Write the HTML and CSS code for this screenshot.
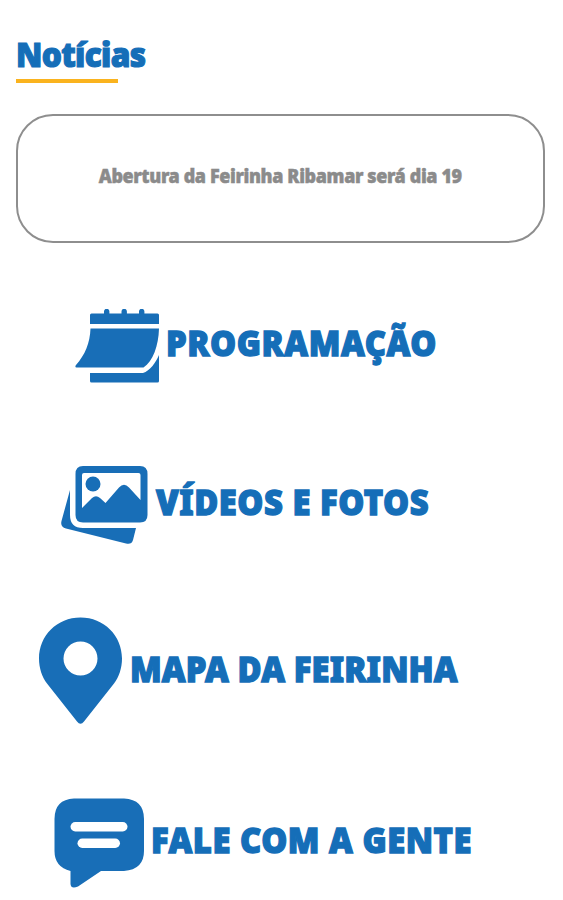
FILE: index.html
```html
<!DOCTYPE html>
<html lang="pt-BR">
<head>
<meta charset="utf-8">
<meta name="viewport" content="width=device-width, initial-scale=1">
<title>Feirinha Ribamar</title>
<link rel="stylesheet" href="styles.css">
</head>
<body>
<main class="page">
  <h1 class="title"><span class="title-text">Notícias</span></h1>
  <a class="news"><span class="news-text">Abertura da Feirinha Ribamar será dia 19</span></a>
  <nav class="menu">
    <a class="item item-program">
      <svg class="icon" width="85" height="74" viewBox="75 309 85 74">
        <path d="M90 324V315Q90 313.500 91.500 313.500H104V311.500A2.700 2.700 0 0 1 109.400 311.500V313.500H121.500V311.500A2.700 2.700 0 0 1 126.900 311.500V313.500H139V311.500A2.700 2.700 0 0 1 144.400 311.500V313.500H157.500Q159 313.500 159 315V324Z"/>
        <path d="M90.500 328.500H159C158.500 346 153 361 143.500 367.500H76.500Q74.500 367 76 365C85 355 90 343 90.500 328.500Z"/>
        <path d="M90 373H143C150 371 156 362 159 355V381Q159 382.500 157.500 382.500H91.500Q90 382.500 90 381Z"/>
      </svg>
      <span class="label label-program">PROGRAMAÇÃO</span>
    </a>
    <a class="item item-media">
      <svg class="icon" width="87" height="79" viewBox="61 466 87 79">
        <path fill-rule="evenodd" d="M83 466H140Q147.500 466 147.500 474V515Q147.500 522.500 140 522.500H83Q75.500 522.500 75.500 515V474Q75.500 466 83 466ZM84 473Q82 473 82 475V508L92 498Q96 494.500 100 498L105.500 503L119 487.500Q124 482 129 487.500L140.500 500V475Q140.500 473 138.500 473Z"/>
        <circle cx="93" cy="484" r="7.500"/>
        <path d="M70 490V515Q70 528 83 528H136L133 540Q131.500 545 126 543.500L66 528.500Q60 527 61.500 521Z"/>
      </svg>
      <span class="label label-media">VÍDEOS E FOTOS</span>
    </a>
    <a class="item item-map">
      <svg class="icon" width="84" height="107" viewBox="39 617 84 107">
        <path fill-rule="evenodd" d="M80.500 617.500C57 617.500 39 635.500 39 658.500C39 668 42 677 47 683.500L77 721.500Q80.500 726 84 721.500L114 683.500C119 677 122 668 122 658.500C122 635.500 104 617.500 80.500 617.500ZM80.500 641.500A17 17 0 1 1 80.500 675.500A17 17 0 1 1 80.500 641.500Z"/>
      </svg>
      <span class="label label-map">MAPA DA FEIRINHA</span>
    </a>
    <a class="item item-contact">
      <svg class="icon" width="90" height="90" viewBox="54 798 90 90">
        <path d="M74 798.500H124Q144 799.500 144 819V851Q144 869.500 124 871H101L78 886.500Q71 889.500 70.500 884V871Q54.500 867 54.500 851V819Q54.500 799.500 74 798.500Z"/>
        <rect class="gap" x="70.500" y="822" width="57" height="9.500" rx="4.750"/>
        <rect class="gap" x="77.500" y="838.500" width="42.500" height="9.500" rx="4.750"/>
      </svg>
      <span class="label label-contact">FALE COM A GENTE</span>
    </a>
  </nav>
</main>
</body>
</html>
```
FILE: styles.css
```css
* { box-sizing: border-box; }
body {
  margin: 0;
  background: #fff;
  color: #156eb8;
  font-family: "Noto Sans", "Open Sans", sans-serif;
  font-weight: 900;
}
.page {
  height: 900px;
  padding: 34px 18px 0 16px;
  overflow: hidden;
}
.title {
  width: 102px;
  height: 49px;
  margin: 0 0 31px;
  border-bottom: 4px solid #fab31e;
  font-size: 34px;
  line-height: 41px;
  font-weight: 900;
  white-space: nowrap;
}
.title-text {
  display: inline-block;
  transform: scaleX(0.93);
  transform-origin: left;
  letter-spacing: -0.700px;
  -webkit-text-stroke: 1.200px currentColor;
}
.news {
  display: flex;
  align-items: center;
  justify-content: center;
  height: 129px;
  padding-bottom: 7px;
  border: 2px solid #8e8e8e;
  border-radius: 37px;
  color: #8b8b8b;
  font-size: 19.500px;
  white-space: nowrap;
}
.news-text {
  transform: scaleX(0.92);
  letter-spacing: -0.400px;
  -webkit-text-stroke: 0.500px currentColor;
}
.menu { display: flex; flex-direction: column; }
.item {
  display: flex;
  align-items: center;
  white-space: nowrap;
}
.item-program { margin: 66px 0 0 59px; height: 74px; gap: 6px; }
.item-media { margin: 83px 0 0 45px; height: 79px; gap: 8px; }
.item-map { margin: 72px 0 0 23px; height: 107px; gap: 7px; }
.item-contact { margin: 74px 0 0 38px; height: 90px; gap: 7px; }
.icon { flex: none; display: block; fill: #186eb7; }
.gap { fill: #fff; }
.label {
  font-size: 34.500px;
  line-height: 44px;
  padding-bottom: 6px;
  transform: scaleX(0.95);
  transform-origin: left;
  -webkit-text-stroke: 1.300px currentColor;
}
.label-program { letter-spacing: 0.600px; }
.label-media { letter-spacing: 0.550px; padding-bottom: 8px; }
.label-map { letter-spacing: 0.150px; padding-bottom: 3px; }
.label-contact { letter-spacing: 0.550px; }
```
